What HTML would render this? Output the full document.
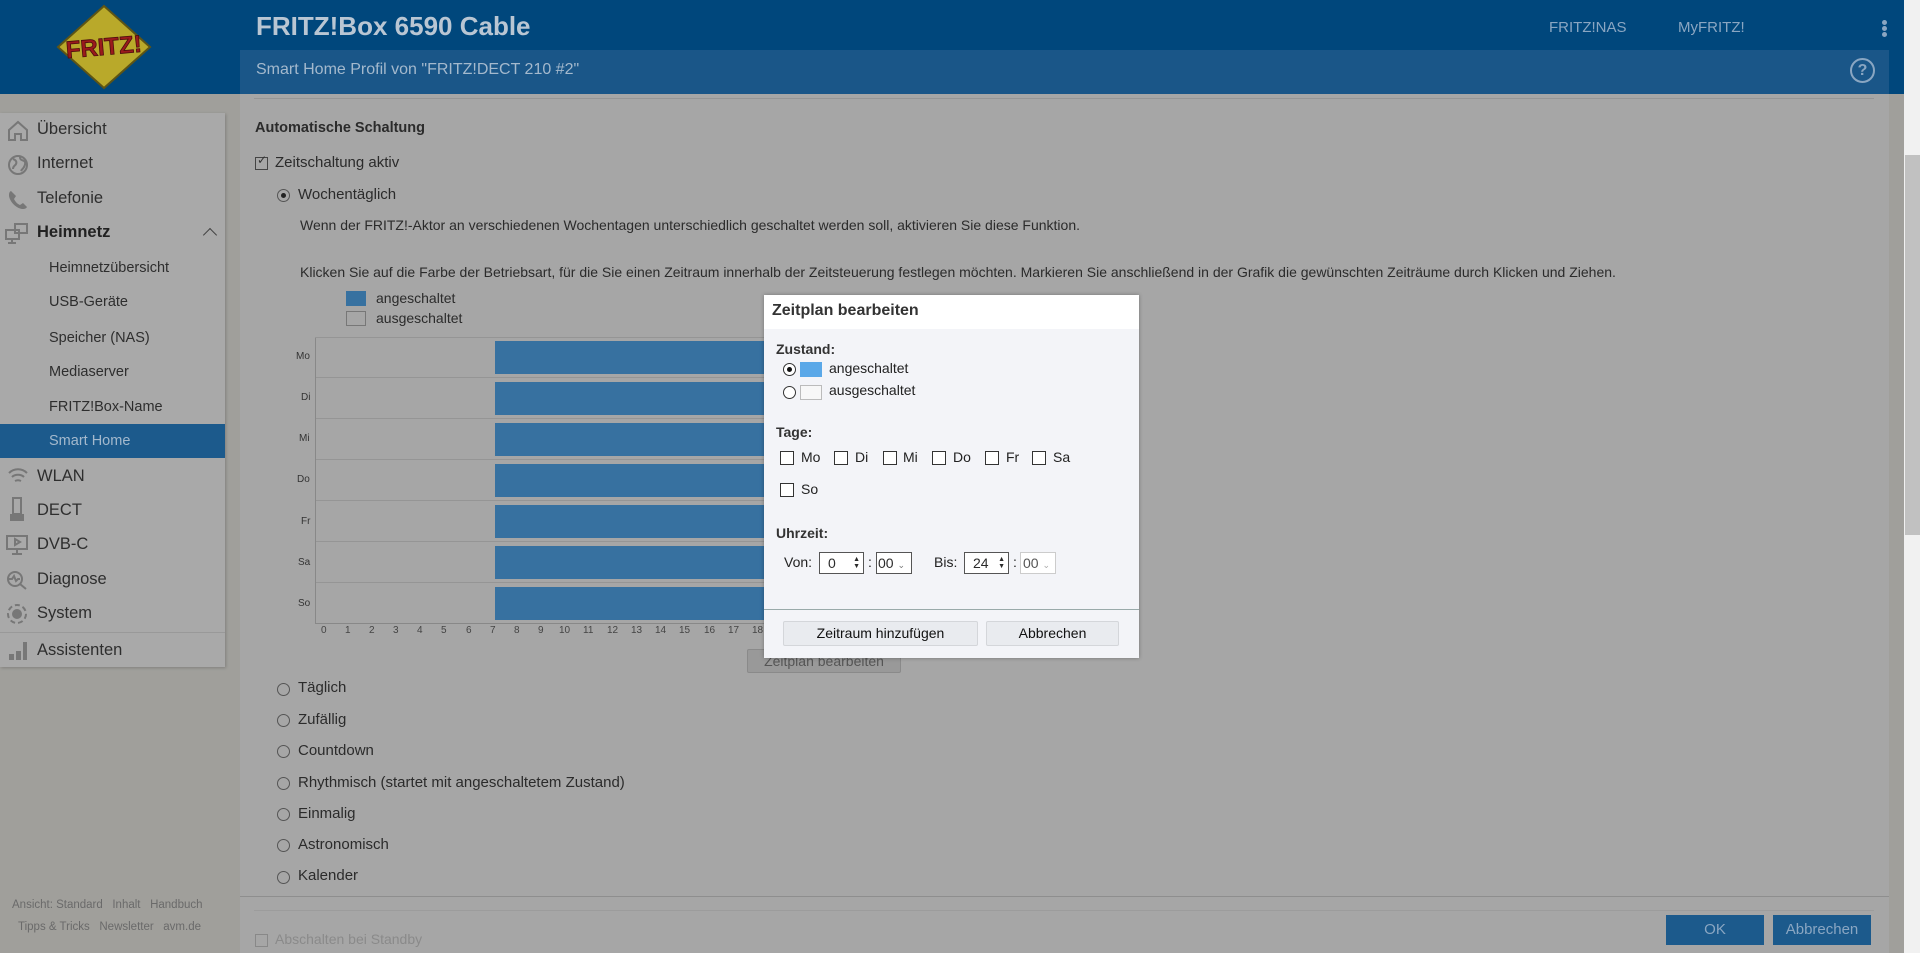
<!DOCTYPE html>
<html><head><meta charset="utf-8"><style>
*{margin:0;padding:0;box-sizing:border-box}
body{width:1920px;height:953px;overflow:hidden;background:#a09f9b;font-family:"Liberation Sans",sans-serif;color:#2b2b2b;position:relative}
.a{position:absolute;white-space:nowrap}
.hdr{left:0;top:0;width:1904px;height:94px;background:#00477c}
.sub{left:240px;top:50px;width:1649px;height:44px;background:#1a5688}
.side{left:0;top:113px;width:225px;height:554px;background:#a9a9a9;box-shadow:1px 1px 3px rgba(0,0,0,.2)}
.mi{left:37px;font-size:16.5px;color:#2e2e2e}
.si{left:49px;font-size:14.5px;color:#2e2e2e}
.panel{left:240px;top:94px;width:1649px;height:859px;background:#a6a6a6}
.t{font-size:15px;color:#2b2b2b}
.rad{width:13px;height:13px;border:1px solid #555;border-radius:50%;background:transparent}
.cb{width:13px;height:13px;border:1px solid #444}
.row{left:316px;width:570px;height:41px;border-bottom:1px solid #959595}
.bar{left:495px;width:290px;height:33px;background:#3771a0}
.hl{font-size:10px;color:#444;top:625px}
.dlg{left:764px;top:295px;width:375px;height:363px;background:#f3f4f8;box-shadow:0 0 4px rgba(0,0,0,.3)}
.d{font-size:14px;color:#222}
.dcb{width:14px;height:14px;border:1px solid #333;background:#fff}
.btn{height:25px;border:1px solid #d4d6da;background:#e9ebef;border-radius:2px;font-size:14px;color:#111;text-align:center;line-height:23px}
</style></head><body>
<div class="a hdr"></div>
<svg class="a" style="left:52px;top:4px" width="110" height="86" viewBox="0 0 110 86">
<polygon points="52,2 98,43 52,84 6,43" fill="#b9a92a" stroke="#5d5415" stroke-width="2"/>
<text x="52" y="51" text-anchor="middle" font-family="Liberation Sans" font-weight="bold" font-size="24" fill="#9a1a1c" stroke="#4a0e0e" stroke-width="0.8" transform="rotate(-5 52 45)">FRITZ!</text>
</svg>
<div class="a" style="left:256px;top:11px;font-size:26px;font-weight:bold;color:#b9c6d3">FRITZ!Box 6590 Cable</div>
<div class="a" style="left:1549px;top:19px;font-size:15px;color:#8aa6c2">FRITZ!NAS</div>
<div class="a" style="left:1678px;top:19px;font-size:15px;color:#8aa6c2">MyFRITZ!</div>
<div class="a" style="left:1882px;top:20px;width:5px;height:5px;border-radius:50%;background:#8aa6c2;box-shadow:0 6px 0 #8aa6c2,0 12px 0 #8aa6c2"></div>
<div class="a panel"></div>
<div class="a sub"></div>
<div class="a" style="left:256px;top:61px;font-size:16px;color:#a4b9cd">Smart Home Profil von "FRITZ!DECT 210 #2"</div>
<div class="a" style="left:1850px;top:58px;width:25px;height:25px;border:2px solid #8aa6c2;border-radius:50%;color:#8aa6c2;font-weight:bold;font-size:16px;text-align:center;line-height:21px">?</div>
<div class="a" style="left:1904px;top:0;width:16px;height:953px;background:#f1f1f1"></div>
<div class="a" style="left:1905px;top:155px;width:15px;height:380px;background:#c1c1c1"></div>
<div class="a" style="left:254px;top:98px;width:1620px;height:1px;background:#959595"></div>

<div class="a side"></div>
<svg class="a" style="left:6px;top:119px" width="24" height="24" viewBox="0 0 24 24" fill="none" stroke="#777" stroke-width="2"><path d="M3 11L12 3l9 8v10H15v-6H9v6H3z"/></svg>
<div class="a mi" style="top:120px">Übersicht</div>
<svg class="a" style="left:7px;top:154px" width="22" height="22" viewBox="0 0 22 22"><circle cx="11" cy="11" r="9" fill="none" stroke="#777" stroke-width="2"/><path d="M6 5c3 1 4 3 3 5s-3 2-3 5M13 3c0 3 2 3 4 4s1 4 0 6-2 2-3 4" fill="none" stroke="#777" stroke-width="2"/></svg>
<div class="a mi" style="top:154px">Internet</div>
<svg class="a" style="left:7px;top:189px" width="22" height="22" viewBox="0 0 22 22"><path d="M4 2c-2 1-2 3-2 5 1 6 7 12 13 13 2 0 4 0 5-2l-4-4-3 2c-3-1-5-4-6-6l2-3z" fill="#777"/></svg>
<div class="a mi" style="top:189px">Telefonie</div>
<svg class="a" style="left:4px;top:222px" width="26" height="24" viewBox="0 0 26 24" fill="none" stroke="#777" stroke-width="2"><rect x="2" y="8" width="13" height="9"/><rect x="11" y="2" width="12" height="9"/><path d="M8 17v4M4 21h8"/></svg>
<div class="a mi" style="top:223px;font-weight:bold;color:#222">Heimnetz</div>
<div class="a" style="left:205px;top:230px;width:10px;height:10px;border-left:1.5px solid #444;border-top:1.5px solid #444;transform:rotate(45deg)"></div>
<div class="a si" style="top:260px">Heimnetzübersicht</div>
<div class="a si" style="top:294px">USB-Geräte</div>
<div class="a si" style="top:330px">Speicher (NAS)</div>
<div class="a si" style="top:364px">Mediaserver</div>
<div class="a si" style="top:399px">FRITZ!Box-Name</div>
<div class="a" style="left:0;top:424px;width:225px;height:34px;background:#1c5a8c"></div>
<div class="a si" style="top:433px;color:#a4b9cd">Smart Home</div>
<svg class="a" style="left:7px;top:466px" width="22" height="20" viewBox="0 0 22 20" fill="none" stroke="#777" stroke-width="2"><path d="M2 7c5-5 13-5 18 0M5 11c3-3 9-3 12 0M8 15c2-1 4-1 6 0"/></svg>
<div class="a mi" style="top:467px">WLAN</div>
<svg class="a" style="left:9px;top:497px" width="16" height="26"><rect x="4" y="1" width="8" height="16" fill="none" stroke="#777" stroke-width="2"/><rect x="1" y="17" width="14" height="7" fill="#777"/></svg>
<div class="a mi" style="top:501px">DECT</div>
<svg class="a" style="left:5px;top:534px" width="24" height="22" fill="none" stroke="#777" stroke-width="2"><rect x="2" y="2" width="20" height="13"/><path d="M10 5l5 3-5 3zM12 15v4M7 20h10"/></svg>
<div class="a mi" style="top:535px">DVB-C</div>
<svg class="a" style="left:5px;top:569px" width="24" height="22" fill="none" stroke="#777" stroke-width="2"><circle cx="10" cy="10" r="7"/><path d="M15 15l6 5M4 10h3l2-3 2 5 2-2h2"/></svg>
<div class="a mi" style="top:570px">Diagnose</div>
<svg class="a" style="left:6px;top:603px" width="22" height="22" fill="none" stroke="#777" stroke-width="2"><circle cx="11" cy="11" r="9" stroke-dasharray="5 3"/><circle cx="11" cy="11" r="4" fill="#777"/></svg>
<div class="a mi" style="top:604px">System</div>
<div class="a" style="left:0;top:632px;width:225px;height:1px;background:#999"></div>
<svg class="a" style="left:7px;top:640px" width="22" height="22"><rect x="2" y="14" width="5" height="6" fill="#777"/><rect x="9" y="11" width="5" height="9" fill="#777"/><path d="M16 2l4 0 0 18-4 0z" fill="#777"/></svg>
<div class="a mi" style="top:641px">Assistenten</div>
<div class="a" style="left:12px;top:899px;font-size:11.5px;color:#6a6a6a">Ansicht: Standard &nbsp;&nbsp;Inhalt &nbsp;&nbsp;Handbuch</div>
<div class="a" style="left:18px;top:921px;font-size:11.5px;color:#6a6a6a">Tipps &amp; Tricks &nbsp;&nbsp;Newsletter &nbsp;&nbsp;avm.de</div>

<div class="a" style="left:255px;top:120px;font-size:14.5px;font-weight:bold;color:#2b2b2b">Automatische Schaltung</div>
<div class="a cb" style="left:255px;top:157px"></div>
<div class="a" style="left:257px;top:153px;font-size:12px;color:#333">✓</div>
<div class="a t" style="left:275px;top:154px">Zeitschaltung aktiv</div>
<div class="a rad" style="left:277px;top:189px"></div>
<div class="a" style="left:281px;top:193px;width:5px;height:5px;border-radius:50%;background:#222"></div>
<div class="a t" style="left:298px;top:186px">Wochentäglich</div>
<div class="a t" style="left:300px;top:217px;font-size:14px">Wenn der FRITZ!-Aktor an verschiedenen Wochentagen unterschiedlich geschaltet werden soll, aktivieren Sie diese Funktion.</div>
<div class="a t" style="left:300px;top:264px;font-size:14px">Klicken Sie auf die Farbe der Betriebsart, für die Sie einen Zeitraum innerhalb der Zeitsteuerung festlegen möchten. Markieren Sie anschließend in der Grafik die gewünschten Zeiträume durch Klicken und Ziehen.</div>
<div class="a" style="left:346px;top:291px;width:20px;height:15px;background:#3771a0"></div>
<div class="a" style="left:346px;top:311px;width:20px;height:15px;border:1px solid #777"></div>
<div class="a t" style="left:376px;top:290px;font-size:14px">angeschaltet</div>
<div class="a t" style="left:376px;top:310px;font-size:14px">ausgeschaltet</div>
<div class="a" style="left:315px;top:337px;width:1px;height:287px;background:#888"></div>
<div class="a" style="left:315px;top:337px;width:570px;height:1px;background:#959595"></div>
<div class="a row" style="top:337px"></div><div class="a row" style="top:378px"></div><div class="a row" style="top:419px"></div><div class="a row" style="top:460px"></div><div class="a row" style="top:501px"></div><div class="a row" style="top:542px"></div><div class="a row" style="top:583px;border-bottom:1px solid #888"></div>
<div class="a bar" style="top:341px"></div><div class="a bar" style="top:382px"></div><div class="a bar" style="top:423px"></div><div class="a bar" style="top:464px"></div><div class="a bar" style="top:505px"></div><div class="a bar" style="top:546px"></div><div class="a bar" style="top:587px"></div>
<div class="a" style="left:296px;top:351px;font-size:10px;color:#333">Mo</div>
<div class="a" style="left:301px;top:392px;font-size:10px;color:#333">Di</div>
<div class="a" style="left:299px;top:433px;font-size:10px;color:#333">Mi</div>
<div class="a" style="left:297px;top:474px;font-size:10px;color:#333">Do</div>
<div class="a" style="left:301px;top:516px;font-size:10px;color:#333">Fr</div>
<div class="a" style="left:298px;top:557px;font-size:10px;color:#333">Sa</div>
<div class="a" style="left:298px;top:598px;font-size:10px;color:#333">So</div>
<div class="a hl" style="left:321px">0</div><div class="a hl" style="left:345px">1</div><div class="a hl" style="left:369px">2</div><div class="a hl" style="left:393px">3</div><div class="a hl" style="left:417px">4</div><div class="a hl" style="left:441px">5</div><div class="a hl" style="left:466px">6</div><div class="a hl" style="left:490px">7</div><div class="a hl" style="left:514px">8</div><div class="a hl" style="left:538px">9</div><div class="a hl" style="left:559px">10</div><div class="a hl" style="left:583px">11</div><div class="a hl" style="left:607px">12</div><div class="a hl" style="left:631px">13</div><div class="a hl" style="left:655px">14</div><div class="a hl" style="left:679px">15</div><div class="a hl" style="left:704px">16</div><div class="a hl" style="left:728px">17</div><div class="a hl" style="left:752px">18</div>
<div class="a" style="left:747px;top:649px;width:154px;height:24px;background:#999;border:1px solid #8a8a8a;border-radius:2px;font-size:14px;color:#555;text-align:center;line-height:22px">Zeitplan bearbeiten</div>

<div class="a rad" style="left:277px;top:683px"></div><div class="a t" style="left:298px;top:679px">Täglich</div>
<div class="a rad" style="left:277px;top:714px"></div><div class="a t" style="left:298px;top:711px">Zufällig</div>
<div class="a rad" style="left:277px;top:745px"></div><div class="a t" style="left:298px;top:742px">Countdown</div>
<div class="a rad" style="left:277px;top:777px"></div><div class="a t" style="left:298px;top:774px">Rhythmisch (startet mit angeschaltetem Zustand)</div>
<div class="a rad" style="left:277px;top:808px"></div><div class="a t" style="left:298px;top:805px">Einmalig</div>
<div class="a rad" style="left:277px;top:839px"></div><div class="a t" style="left:298px;top:836px">Astronomisch</div>
<div class="a rad" style="left:277px;top:871px"></div><div class="a t" style="left:298px;top:867px">Kalender</div>
<div class="a" style="left:240px;top:896px;width:1649px;height:1px;background:#8e8e8e"></div>
<div class="a" style="left:254px;top:910px;width:1620px;height:1px;background:#9c9c9c"></div>
<div class="a cb" style="left:255px;top:934px;border-color:#888"></div>
<div class="a" style="left:275px;top:931px;font-size:14px;color:#8a8a8a">Abschalten bei Standby</div>
<div class="a" style="left:1666px;top:915px;width:98px;height:30px;background:#1c5a8c;color:#8aa6c2;font-size:15px;text-align:center;line-height:30px">OK</div>
<div class="a" style="left:1773px;top:915px;width:98px;height:30px;background:#1c5a8c;color:#8aa6c2;font-size:15px;text-align:center;line-height:30px">Abbrechen</div>

<div class="a dlg"></div>
<div class="a" style="left:764px;top:295px;width:375px;height:34px;background:#fff"></div>
<div class="a" style="left:772px;top:302px;font-size:16px;font-weight:bold;color:#333">Zeitplan bearbeiten</div>
<div class="a d" style="left:776px;top:341px;font-weight:bold;color:#333">Zustand:</div>
<div class="a" style="left:783px;top:363px;width:13px;height:13px;border-radius:50%;border:1px solid #333;background:#fff"></div>
<div class="a" style="left:787px;top:367px;width:5px;height:5px;border-radius:50%;background:#111"></div>
<div class="a" style="left:800px;top:362px;width:22px;height:15px;background:#5aa8e8"></div>
<div class="a d" style="left:829px;top:360px">angeschaltet</div>
<div class="a" style="left:783px;top:386px;width:13px;height:13px;border-radius:50%;border:1px solid #333;background:#fff"></div>
<div class="a" style="left:800px;top:385px;width:22px;height:15px;border:1px solid #bbb;background:#f7f7f7"></div>
<div class="a d" style="left:829px;top:382px">ausgeschaltet</div>
<div class="a d" style="left:776px;top:424px;font-weight:bold;color:#333">Tage:</div>
<div class="a dcb" style="left:780px;top:451px"></div><div class="a d" style="left:801px;top:449px">Mo</div>
<div class="a dcb" style="left:834px;top:451px"></div><div class="a d" style="left:855px;top:449px">Di</div>
<div class="a dcb" style="left:883px;top:451px"></div><div class="a d" style="left:903px;top:449px">Mi</div>
<div class="a dcb" style="left:932px;top:451px"></div><div class="a d" style="left:953px;top:449px">Do</div>
<div class="a dcb" style="left:985px;top:451px"></div><div class="a d" style="left:1006px;top:449px">Fr</div>
<div class="a dcb" style="left:1032px;top:451px"></div><div class="a d" style="left:1053px;top:449px">Sa</div>
<div class="a dcb" style="left:780px;top:483px"></div><div class="a d" style="left:801px;top:481px">So</div>
<div class="a d" style="left:776px;top:525px;font-weight:bold;color:#333">Uhrzeit:</div>
<div class="a d" style="left:784px;top:554px">Von:</div>
<div class="a" style="left:819px;top:552px;width:45px;height:22px;border:1px solid #555;background:#fff;font-size:14px;padding-left:8px;line-height:20px">0<span style="position:absolute;right:3px;top:3px;font-size:7px;line-height:7px">▲<br>▼</span></div>
<div class="a d" style="left:868px;top:554px">:</div>
<div class="a" style="left:876px;top:552px;width:36px;height:22px;border:1px solid #555;background:#fff;font-size:14px;padding-left:1px;line-height:20px">00 <span style="font-size:9px;color:#777">⌄</span></div>
<div class="a d" style="left:934px;top:554px">Bis:</div>
<div class="a" style="left:964px;top:552px;width:45px;height:22px;border:1px solid #555;background:#fff;font-size:14px;padding-left:8px;line-height:20px">24<span style="position:absolute;right:3px;top:3px;font-size:7px;line-height:7px">▲<br>▼</span></div>
<div class="a d" style="left:1013px;top:554px">:</div>
<div class="a" style="left:1020px;top:552px;width:36px;height:22px;border:1px solid #ccc;background:#fff;font-size:14px;padding-left:2px;line-height:20px;color:#555">00 <span style="font-size:9px;color:#aaa">⌄</span></div>
<div class="a" style="left:764px;top:609px;width:375px;height:1px;background:#9aa"></div>
<div class="a btn" style="left:783px;top:621px;width:195px">Zeitraum hinzufügen</div>
<div class="a btn" style="left:986px;top:621px;width:133px">Abbrechen</div>
</body></html>
